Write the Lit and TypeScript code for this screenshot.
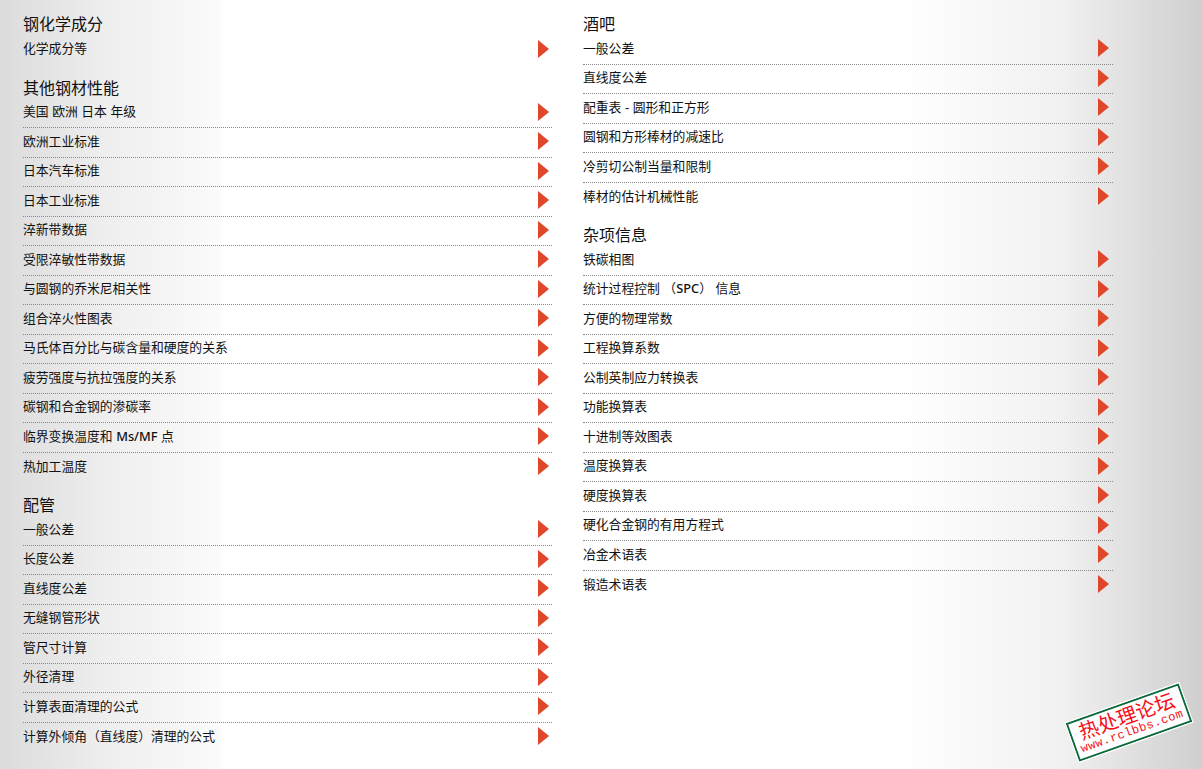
import { LitElement, html, css } from "lit";
import { customElement } from "lit/decorators.js";

type Section = { title: string; rows: string[] };

const left: Section[] = [
  { title: "钢化学成分", rows: ["化学成分等"] },
  {
    title: "其他钢材性能",
    rows: ["美国 欧洲 日本 年级", "欧洲工业标准", "日本汽车标准", "日本工业标准", "淬新带数据", "受限淬敏性带数据", "与圆钢的乔米尼相关性", "组合淬火性图表", "马氏体百分比与碳含量和硬度的关系", "疲劳强度与抗拉强度的关系", "碳钢和合金钢的渗碳率", "临界变换温度和 Ms/MF 点", "热加工温度"],
  },
  {
    title: "配管",
    rows: ["一般公差", "长度公差", "直线度公差", "无缝钢管形状", "管尺寸计算", "外径清理", "计算表面清理的公式", "计算外倾角（直线度）清理的公式"],
  },
];
const right: Section[] = [
  { title: "酒吧", rows: ["一般公差", "直线度公差", "配重表 - 圆形和正方形", "圆钢和方形棒材的减速比", "冷剪切公制当量和限制", "棒材的估计机械性能"] },
  {
    title: "杂项信息",
    rows: ["铁碳相图", "统计过程控制 （SPC） 信息", "方便的物理常数", "工程换算系数", "公制英制应力转换表", "功能换算表", "十进制等效图表", "温度换算表", "硬度换算表", "硬化合金钢的有用方程式", "冶金术语表", "锻造术语表"],
  },
];

@customElement("app-root")
export class AppRoot extends LitElement {
  static styles = css`
    :host {
      display: block;
      position: relative;
      width: 1202px;
      height: 769px;
      overflow: hidden;
      font-family: "Liberation Sans", "Noto Sans CJK SC", sans-serif;
      color: #111;
      background: linear-gradient(90deg, #dddcdc 0, #f0efef 110px, #f7f6f6 180px, #fbfbfb 218px, #fff 224px, #fff 900px, #f1f1f1 1060px, #d0cfcf 1202px);
    }
    .cols {
      display: grid;
      grid-template-columns: 529px 530px;
      column-gap: 31px;
      padding: 13px 0 0 23px;
    }
    .section { margin-bottom: 12px; }
    h2 {
      margin: 0;
      height: 22px;
      line-height: 23px;
      font-size: 16px;
      font-weight: 400;
    }
    .row {
      display: flex;
      align-items: center;
      justify-content: space-between;
      box-sizing: border-box;
      height: 29.5px;
      padding: 0 3px 2px 0;
      font-size: 12.8px;
      border-bottom: 1px dotted #8a8a8a;
    }
    .row:last-child { border-bottom: none; }
    .label { margin-bottom: 2px; }
    .lat { font-family: "Noto Sans", sans-serif; font-weight: 500; }
    .right .row { padding-right: 4px; }
    .row svg { display: block; width: 11px; height: 18px; }
    .stamp {
      position: absolute;
      left: 1069px;
      top: 702px;
      width: 120px;
      height: 41px;
      box-sizing: border-box;
      border: 2px solid #0b6b3c;
      outline: 1px solid #fff;
      background: #fff;
      transform: rotate(-19.5deg);
      color: #f5101a;
      text-align: center;
      overflow: hidden;
    }
    .stamp .cn {
      font-family: "Noto Sans CJK SC", sans-serif;
      font-size: 20px;
      line-height: 22px;
      white-space: nowrap;
    }
    .stamp .url {
      font-family: "Liberation Mono", monospace;
      font-size: 12px;
      line-height: 13px;
      letter-spacing: 0.5px;
      white-space: nowrap;
    }
  `;

  private label(text: string) {
    const m = text.match(/^(.*?)(Ms\/MF|SPC)(.*)$/);
    return m
      ? html`<span class="label">${m[1]}<span class="lat">${m[2]}</span>${m[3]}</span>`
      : html`<span class="label">${text}</span>`;
  }

  private renderSection(s: Section) {
    return html`<section class="section">
      <h2>${s.title}</h2>
      ${s.rows.map(
        (r) => html`<div class="row">
          ${this.label(r)}
          <svg viewBox="0 0 11 18"><path d="M0 0L11 9L0 18Z" fill="#e0472a"></path></svg>
        </div>`
      )}
    </section>`;
  }

  render() {
    return html`<div class="cols">
        <div>${left.map((s) => this.renderSection(s))}</div>
        <div class="right">${right.map((s) => this.renderSection(s))}</div>
      </div>
      <div class="stamp"><div class="cn">热处理论坛</div><div class="url">www.rclbbs.com</div></div>`;
  }
}
